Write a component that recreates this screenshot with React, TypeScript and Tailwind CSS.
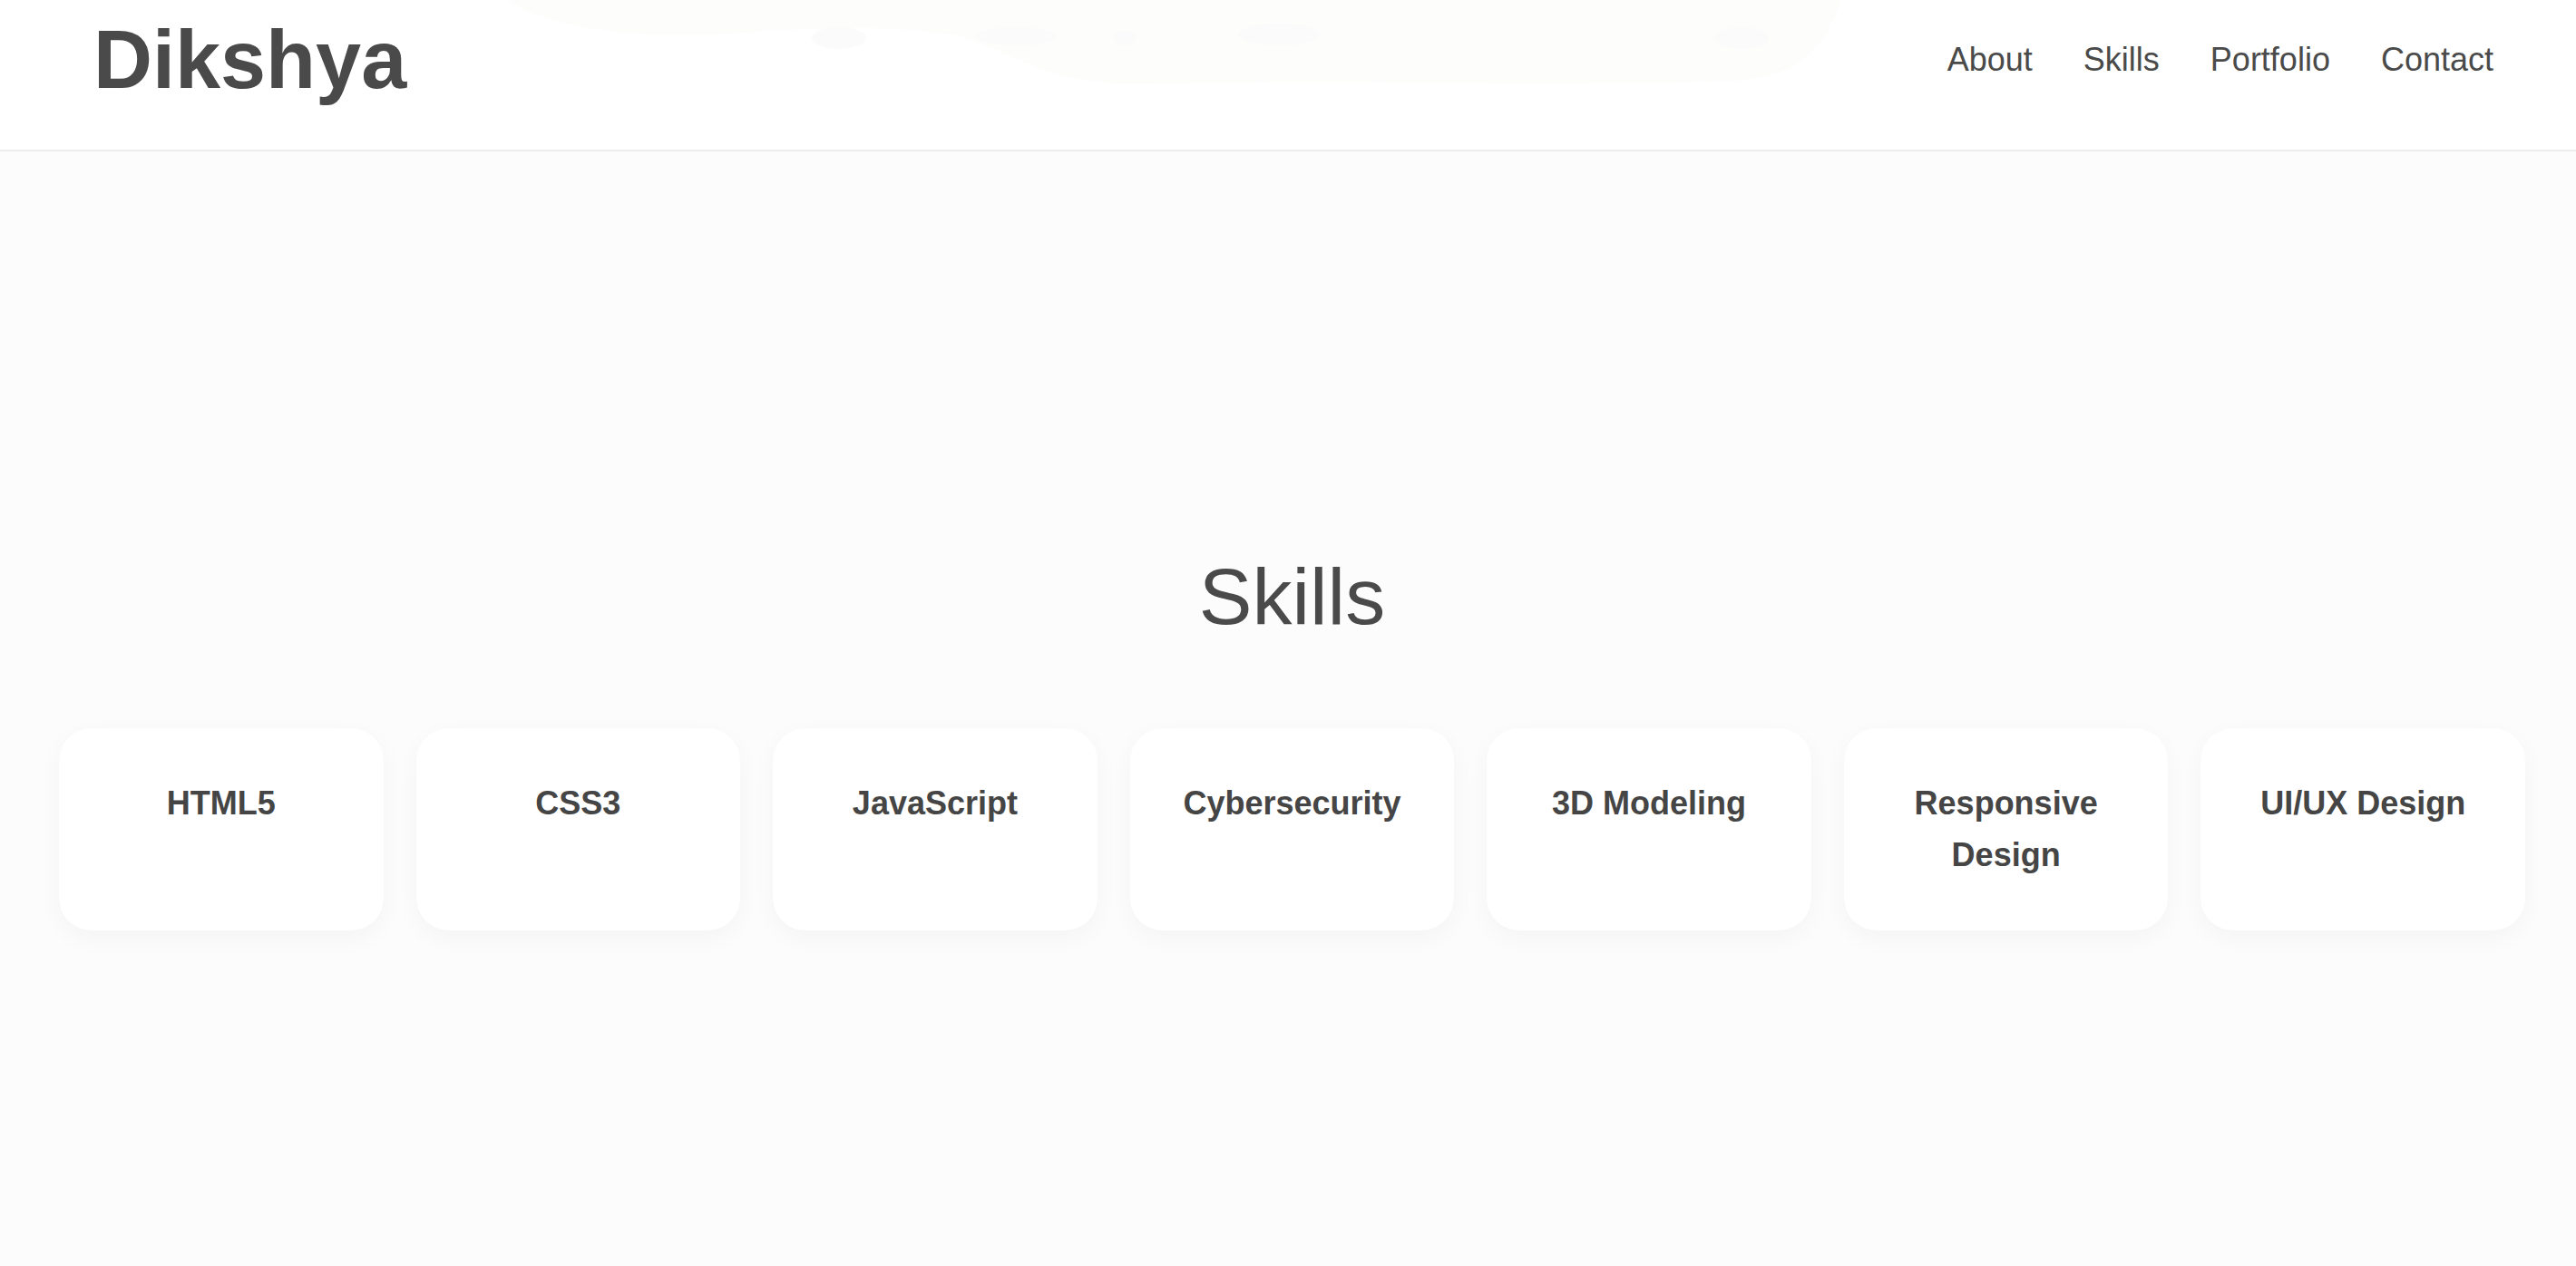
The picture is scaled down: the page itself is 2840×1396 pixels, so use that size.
const SKILLS = [
  "HTML5",
  "CSS3",
  "JavaScript",
  "Cybersecurity",
  "3D Modeling",
  "Responsive Design",
  "UI/UX Design",
];

const NAV = ["About", "Skills", "Portfolio", "Contact"];

function HeaderDecor() {
  // very faint cloud shapes behind the header
  return (
    <svg
      className="pointer-events-none absolute inset-0 h-full w-full"
      viewBox="0 0 2840 165"
      preserveAspectRatio="none"
    >
      <path
        d="M560 0 C600 30 700 45 820 36 C930 28 1000 30 1060 40 C1120 60 1160 95 1260 92 C1500 88 1700 94 1900 90 C1980 86 2010 60 2030 0 Z"
        fill="#fdfdfc"
      />
      <ellipse cx="925" cy="42" rx="30" ry="12" fill="#fcfbfb" />
      <ellipse cx="1120" cy="40" rx="45" ry="10" fill="#fcfbfb" />
      <ellipse cx="1240" cy="42" rx="12" ry="8" fill="#fcfbfb" />
      <ellipse cx="1410" cy="38" rx="45" ry="12" fill="#fcfbfb" />
      <ellipse cx="1920" cy="42" rx="30" ry="12" fill="#fcfbfb" />
    </svg>
  );
}

export default function App() {
  return (
    <div className="min-h-[1396px] bg-[#fcfcfc] font-['Liberation_Sans',Arial,sans-serif] text-[#4a4a4a]">
      <header className="relative flex items-center justify-between border-b-2 border-[#ececec] bg-white pb-[54px] pl-[103px] pr-[91px] pt-[21px]">
        <HeaderDecor />
        <div className="relative text-[90px] font-bold leading-none">Dikshya</div>
        <nav className="relative flex gap-[56px] text-[36px] leading-none">
          {NAV.map((n) => (
            <a key={n} href="#" className="text-[#4a4a4a]">
              {n}
            </a>
          ))}
        </nav>
      </header>

      <section className="pb-[200px] pl-[65px] pr-[56px] pt-[438px]">
        <h2 className="text-center text-[88px] font-normal leading-[1.2]">Skills</h2>
        <div className="mt-[92px] grid grid-cols-7 gap-[36px]">
          {SKILLS.map((s) => (
            <div
              key={s}
              className="rounded-[36px] bg-white p-[54px] text-center shadow-[0_8px_28px_rgba(0,0,0,0.035)]"
            >
              <h3 className="text-[36px] font-bold leading-[1.6] text-[#454545]">{s}</h3>
            </div>
          ))}
        </div>
      </section>
    </div>
  );
}
